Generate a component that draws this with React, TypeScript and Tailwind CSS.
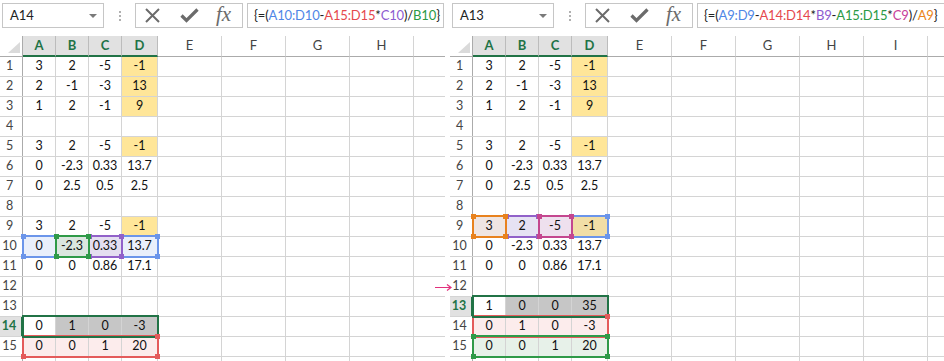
import React from "react";

type Tone = { b: string; h: string; t: string };
type Ref = { row: number; c0: number; c1: number; tone: Tone; corners?: string[] };
type Seg = { s: string; t?: string };

const BLUE: Tone = { b: "border-[#6b95ea]", h: "bg-[#6b95ea]", t: "text-[#4f86e6]" };
const RED: Tone = { b: "border-[#e45b5b]", h: "bg-[#e45b5b]", t: "text-[#e5484d]" };
const PURPLE: Tone = { b: "border-[#9161c9]", h: "bg-[#9161c9]", t: "text-[#8d5bd0]" };
const GREEN: Tone = { b: "border-[#2f9a48]", h: "bg-[#2f9a48]", t: "text-[#2a9a45]" };
const PINK: Tone = { b: "border-[#c4478f]", h: "bg-[#c4478f]", t: "text-[#c8409a]" };
const ORANGE: Tone = { b: "border-[#e8821e]", h: "bg-[#e8821e]", t: "text-[#ea8519]" };

const WIDTHS = [33, 33, 33, 36, 64, 64, 64, 64, 64, 64];
const WCLS = ["w-[33px]", "w-[33px]", "w-[33px]", "w-[36px]", "w-[64px]", "w-[64px]", "w-[64px]", "w-[64px]", "w-[64px]", "w-[64px]"];
const LETTERS = ["A", "B", "C", "D", "E", "F", "G", "H", "I", "J"];
const LEFTS = WIDTHS.map((_, i) => 23 + WIDTHS.slice(0, i).reduce((a, b) => a + b, 0));

const YEL = "bg-[#ffe699]";
const GRAY = "bg-[#c6c6c6]";

const TOP: string[][] = [
  ["3", "2", "-5", "-1"],
  ["2", "-1", "-3", "13"],
  ["1", "2", "-1", "9"],
  [],
  ["3", "2", "-5", "-1"],
  ["0", "-2.3", "0.33", "13.7"],
  ["0", "2.5", "0.5", "2.5"],
  [],
  ["3", "2", "-5", "-1"],
  ["0", "-2.3", "0.33", "13.7"],
  ["0", "0", "0.86", "17.1"],
  [],
];

const leftRows = [...TOP, [], ["0", "1", "0", "-3"], ["0", "0", "1", "20"]];
const rightRows = [...TOP, ["1", "0", "0", "35"], ["0", "1", "0", "-3"], ["0", "0", "1", "20"]];

const baseFills: Record<string, string> = { D1: YEL, D2: YEL, D3: YEL, D5: YEL };

const leftFills: Record<string, string> = {
  ...baseFills,
  D9: YEL,
  A10: "bg-[#e9effb]",
  B10: "bg-[#dbe6df]",
  C10: "bg-[#e4def0]",
  D10: "bg-[#e9effb]",
  B14: GRAY,
  C14: GRAY,
  D14: GRAY,
  A15: "bg-[#fcecec]",
  B15: "bg-[#fcecec]",
  C15: "bg-[#fcecec]",
  D15: "bg-[#fcecec]",
};

const rightFills: Record<string, string> = {
  ...baseFills,
  A9: "bg-[#efe5e2]",
  B9: "bg-[#e6e2f3]",
  C9: "bg-[#eee0ee]",
  D9: "bg-[#f1dea6]",
  B13: GRAY,
  C13: GRAY,
  D13: GRAY,
  A14: "bg-[#fcecec]",
  B14: "bg-[#fcecec]",
  C14: "bg-[#fcecec]",
  D14: "bg-[#fcecec]",
  A15: "bg-[#e7f1e9]",
  B15: "bg-[#e7f1e9]",
  C15: "bg-[#e7f1e9]",
  D15: "bg-[#e7f1e9]",
};

const leftRefs: Ref[] = [
  { row: 10, c0: 0, c1: 3, tone: BLUE },
  { row: 15, c0: 0, c1: 3, tone: RED, corners: ["tr", "bl", "br"] },
  { row: 10, c0: 2, c1: 2, tone: PURPLE },
  { row: 10, c0: 1, c1: 1, tone: GREEN },
];

const rightRefs: Ref[] = [
  { row: 9, c0: 0, c1: 3, tone: BLUE },
  { row: 14, c0: 0, c1: 3, tone: RED, corners: ["tr", "bl", "br"] },
  { row: 9, c0: 1, c1: 1, tone: PURPLE },
  { row: 15, c0: 0, c1: 3, tone: GREEN },
  { row: 9, c0: 2, c1: 2, tone: PINK },
  { row: 9, c0: 0, c1: 0, tone: ORANGE },
];

const leftFormula: Seg[] = [
  { s: "{=(" },
  { s: "A10:D10", t: BLUE.t },
  { s: "-" },
  { s: "A15:D15", t: RED.t },
  { s: "*" },
  { s: "C10", t: PURPLE.t },
  { s: ")/" },
  { s: "B10", t: GREEN.t },
  { s: "}" },
];

const rightFormula: Seg[] = [
  { s: "{=(" },
  { s: "A9:D9", t: BLUE.t },
  { s: "-" },
  { s: "A14:D14", t: RED.t },
  { s: "*" },
  { s: "B9", t: PURPLE.t },
  { s: "-" },
  { s: "A15:D15", t: GREEN.t },
  { s: "*" },
  { s: "C9", t: PINK.t },
  { s: ")/" },
  { s: "A9", t: ORANGE.t },
  { s: "}" },
];

const CORNER_CLS: Record<string, string> = {
  tl: "-left-[1px] -top-[1px]",
  tr: "-right-[1px] -top-[1px]",
  bl: "-left-[1px] -bottom-[1px]",
  br: "-right-[1px] -bottom-[1px]",
};

const boxStyle = (c0: number, c1: number) => ({
  left: LEFTS[c0] - 1,
  width: LEFTS[c1] + WIDTHS[c1] + 1 - (LEFTS[c0] - 1),
});

const Toolbar = ({ name, formula, formulaW }: { name: string; formula: Seg[]; formulaW: string }) => (
  <div className="h-[37px] flex items-start pt-[3px]">
    <div className="ml-[2px] w-[102px] h-[25px] shrink-0 border border-[#c6c6c6] flex items-center justify-between pl-[7px] pr-[6px] text-[13px] text-[#222]">
      <span>{name}</span>
      <span className="w-0 h-0 border-l-[4px] border-r-[4px] border-t-[4px] border-l-transparent border-r-transparent border-t-[#7a7a7a]" />
    </div>
    <div className="w-[31px] h-[25px] shrink-0 flex flex-col items-center justify-center gap-[2px]">
      <span className="w-[2px] h-[2px] bg-[#b0b0b0]" />
      <span className="w-[2px] h-[2px] bg-[#b0b0b0]" />
      <span className="w-[2px] h-[2px] bg-[#b0b0b0]" />
    </div>
    <div className="w-[108px] h-[25px] shrink-0 border border-[#c6c6c6] flex items-center">
      <svg width="15" height="15" viewBox="0 0 15 15" className="ml-[9px]">
        <path d="M1 1 L14 14 M14 1 L1 14" stroke="#6b6b6b" strokeWidth="2" />
      </svg>
      <svg width="19" height="15" viewBox="0 0 19 15" className="ml-[20px]">
        <path d="M1.5 7.5 L6.5 12.5 L17.5 1.5" stroke="#6b6b6b" strokeWidth="3.2" fill="none" />
      </svg>
      <span className="ml-[17px] font-['Liberation_Serif',serif] italic text-[21px] leading-none text-[#6b6b6b] -mt-[3px]">
        fx
      </span>
    </div>
    <div className={`ml-[4px] ${formulaW} h-[25px] shrink-0 border border-[#c6c6c6] flex items-center pl-[6px] text-[13px] tracking-[-0.15px] text-[#222] whitespace-nowrap overflow-hidden`}>
      {formula.map((f, i) => (
        <span key={i} className={f.t}>
          {f.s}
        </span>
      ))}
    </div>
  </div>
);

const Panel = ({
  name,
  formula,
  formulaW,
  rows,
  fills,
  refs,
  selRow,
  arrowRow,
  shown,
  className,
}: {
  name: string;
  formula: Seg[];
  formulaW: string;
  rows: string[][];
  fills: Record<string, string>;
  refs: Ref[];
  selRow: number;
  arrowRow?: number;
  shown: number;
  className: string;
}) => (
  <div className={`shrink-0 flex flex-col ${className}`}>
    <Toolbar name={name} formula={formula} formulaW={formulaW} />
    <div className="flex h-[21px] text-[13px]">
      <div className="w-[23px] shrink-0 border-r border-b border-[#ababab] flex items-end justify-end pr-[2px] pb-[3px]">
        <span className="w-0 h-0 border-l-[12px] border-t-[11px] border-l-transparent border-t-transparent border-b-0 border-r-0 border-b-[#dadada] [border-bottom-width:11px] [border-bottom-style:solid]" />
      </div>
      {LETTERS.map((l, ci) => (
        <div
          key={l}
          className={`${WCLS[ci]} shrink-0 flex items-center justify-center ${
            ci < 4
              ? "bg-[#e1e1e1] text-[#217346] font-bold border-b-2 border-b-[#217346] border-r border-r-[#bcbcbc]"
              : "text-[#444] border-b border-b-[#ababab] border-r border-r-[#d4d4d4]"
          }`}
        >
          {ci < shown ? l : ""}
        </div>
      ))}
    </div>
    {rows.map((vals, ri) => {
      const r = ri + 1;
      const sel = r === selRow;
      return (
        <div key={r} className="relative flex h-[20px] shrink-0 border-b border-[#d4d4d4] text-[12.5px]">
          <div
            className={`relative w-[23px] shrink-0 flex items-center justify-center pr-[3px] ${
              sel ? "bg-[#e1e1e1] text-[#217346] font-bold border-r-2 border-r-[#217346]" : "text-[#444] border-r border-r-[#ababab]"
            }`}
          >
            {r}
            {arrowRow === r && (
              <svg width="17" height="7" viewBox="0 0 17 7" className="absolute -left-[15px] top-[7px]">
                <path d="M0 3.5 L15.5 3.5 M12 0.5 L16 3.5 L12 6.5" stroke="#e2307c" strokeWidth="1.2" fill="none" />
              </svg>
            )}
          </div>
          {WCLS.map((w, ci) => (
            <div
              key={ci}
              className={`${w} shrink-0 border-r border-[#d4d4d4] flex items-center justify-center text-[#111] ${
                fills[`${LETTERS[ci]}${r}`] ?? ""
              }`}
            >
              {vals[ci] ?? ""}
            </div>
          ))}
          {refs
            .filter((f) => f.row === r)
            .map((f, i) => (
              <div
                key={`b${i}`}
                className={`absolute -top-[2px] h-[23px] border-2 z-10 ${f.tone.b}`}
                style={boxStyle(f.c0, f.c1)}
              />
            ))}
          {sel && (
            <div className="absolute -top-[2px] h-[23px] border-2 border-[#217346] z-20" style={boxStyle(0, 3)} />
          )}
          {refs
            .filter((f) => f.row === r)
            .map((f, i) => (
              <div key={`h${i}`} className="absolute -top-[2px] h-[23px] z-30" style={boxStyle(f.c0, f.c1)}>
                {(f.corners ?? ["tl", "tr", "bl", "br"]).map((c) => (
                  <span key={c} className={`absolute w-[5px] h-[5px] ${CORNER_CLS[c]} ${f.tone.h}`} />
                ))}
              </div>
            ))}
        </div>
      );
    })}
    <div className="flex h-[4px] shrink-0">
      <div className="w-[23px] shrink-0 border-r border-r-[#ababab]" />
      {WCLS.map((w, ci) => (
        <div key={ci} className={`${w} shrink-0 border-r border-[#d4d4d4]`} />
      ))}
    </div>
  </div>
);

export default function App() {
  return (
    <div className="w-[944px] h-[361px] overflow-hidden bg-white flex font-['Lato','Open_Sans',sans-serif] text-black">
      <Panel
        className="w-[445px] overflow-hidden"
        name="A14"
        formula={leftFormula}
        formulaW="w-[197px]"
        rows={leftRows}
        fills={leftFills}
        refs={leftRefs}
        selRow={14}
        shown={8}
      />
      <div className="w-[5px] shrink-0" />
      <Panel
        className="w-[494px]"
        name="A13"
        formula={rightFormula}
        formulaW="w-[260px]"
        rows={rightRows}
        fills={rightFills}
        refs={rightRefs}
        selRow={13}
        arrowRow={12}
        shown={9}
      />
    </div>
  );
}
